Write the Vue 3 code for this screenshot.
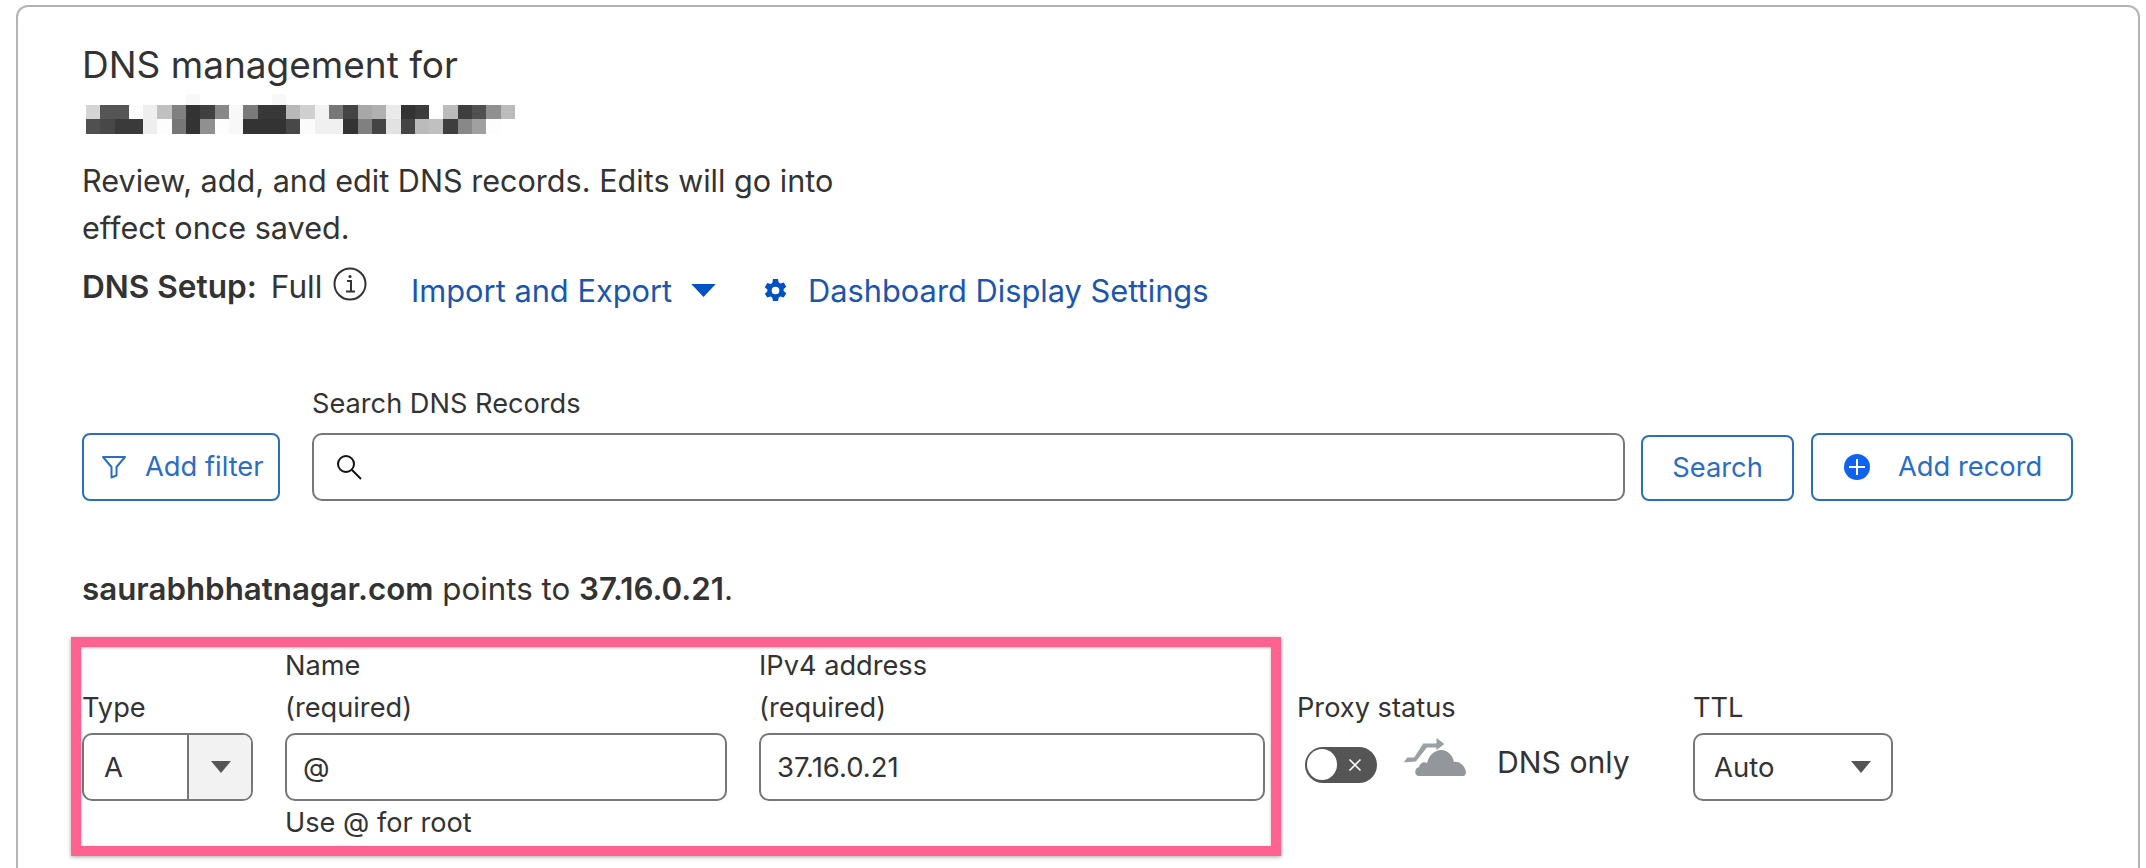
<script setup>
const row0 = Array.from({ length: 30 }, (_, i) => (i === 7 || i === 13 ? '#f8f8f8' : '#fff'))
const row1 = ['#d4d4d4','#555','#555','#fdfdfd','#eee','#c0c0c0','#808080','#333','#404040','#888','#f8f8f8','#7a7a7a','#383838','#383838','#b8b8b8','#d0d0d0','#f2f2f2','#777','#444','#a8a8a8','#b0b0b0','#eaeaea','#333','#3c3c3c','#fff','#bbb','#3e3e3e','#505050','#909090','#bbb']
const row2 = ['#505050','#484848','#3a3a3a','#3a3a3a','#eee','#fdfdfd','#777','#333','#909090','#fdfdfd','#f8f8f8','#333','#333','#333','#484848','#fbfbfb','#f0f0f0','#f0f0f0','#333','#808080','#444','#e2e2e2','#444','#bbb','#c0c0c0','#3e3e3e','#888','#a0a0a0','#fdfdfd','#fff']
const mosaic = [...row0, ...row1, ...row2]
</script>

<template>
  <div class="page">
    <section class="card">
      <h1 class="title">DNS management for</h1>
      <div class="mosaic" role="img" aria-label="Obscured domain name">
        <i v-for="(c, i) in mosaic" :key="i" :style="{ background: c }"></i>
      </div>
      <p class="intro">Review, add, and edit DNS records. Edits will go into<br>effect once saved.</p>

      <div class="setup">
        <span class="setup-state"><b>DNS Setup:</b><span class="full">Full</span>
          <svg class="info" viewBox="0 0 34 34" fill="none" stroke="#333" stroke-width="2"><circle cx="17" cy="17" r="15.500"/><path d="M14 14h4v10M13 24.500h9" /><circle cx="17" cy="9.500" r="1.600" fill="#333" stroke="none"/></svg>
        </span>
        <a class="link import">Import and Export
          <svg class="caret-big" viewBox="0 0 28 16"><path d="M1 1h26L14 15z" fill="#0051c3"/></svg>
        </a>
        <a class="link settings">
          <svg class="gear" viewBox="0 0 24 24" fill="#0051c3"><path fill-rule="evenodd" d="M9.600 1h4.800l.7 3.300 1.600.9 3.200-1 2.400 4.100-2.500 2.300v1.800l2.500 2.300-2.400 4.100-3.200-1-1.600.9-.7 3.300H9.600l-.7-3.300-1.600-.9-3.200 1L1.700 15.200l2.500-2.300v-1.800L1.700 8.800l2.400-4.100 3.200 1 1.600-.9zM12 8.300a3.700 3.700 0 1 0 0 7.400 3.700 3.700 0 0 0 0-7.400z"/></svg>
          Dashboard Display Settings
        </a>
      </div>

      <div class="search-row">
        <button class="btn filter">
          <svg class="funnel" viewBox="0 0 26 24" fill="none" stroke="#2a6fc4" stroke-width="2" stroke-linejoin="round"><path d="M2 2h22l-8.500 10v8.500l-5 2V12z"/></svg>
          Add filter
        </button>
        <label class="search-field">
          <span class="label">Search DNS Records</span>
          <span class="input search-input">
            <svg class="lens" viewBox="0 0 28 28" fill="none" stroke="#111" stroke-width="2"><circle cx="11" cy="11" r="8"/><path d="M17 17l9 9"/></svg>
          </span>
        </label>
        <button class="btn search">Search</button>
        <button class="btn add">
          <svg class="plus" viewBox="0 0 26 26"><circle cx="13" cy="13" r="13" fill="#0f62f0"/><path d="M13 5v16M5 13h16" stroke="#fff" stroke-width="2"/></svg>
          Add record
        </button>
      </div>

      <p class="points"><b>saurabhbhatnagar.com</b> points to <b>37.16.0.21</b>.</p>

      <div class="form">
        <div class="field f-type">
          <span class="label">Type</span>
          <div class="input type-select"><span class="type-val">A</span><span class="type-btn"><svg class="caret" viewBox="0 0 20 12"><path d="M0 0h20L10 12z" fill="#555"/></svg></span></div>
        </div>
        <div class="field f-name">
          <span class="label">Name<br>(required)</span>
          <div class="input text-input">@</div>
          <span class="hint">Use @ for root</span>
        </div>
        <div class="field f-ip">
          <span class="label">IPv4 address<br>(required)</span>
          <div class="input text-input">37.16.0.21</div>
        </div>
        <div class="field f-proxy">
          <span class="label">Proxy status</span>
          <div class="proxy">
            <span class="toggle"><span class="knob"></span><svg class="x" viewBox="0 0 14 14" stroke="#fff" stroke-width="1.600"><path d="M1.500 1.500l11 11M12.500 1.500l-11 11"/></svg></span>
            <svg class="cloud" viewBox="0 0 63 39">
              <path fill="#93979b" d="M16 39c-5 0-5-8 0-9 1-4 5-6 8-4 2-8 8-13 14-13 7 0 12 6 13 12 6-1 11 4 12 10 0 2-1 4-3 4z"/>
              <path fill="#9aa0a5" stroke="#fff" stroke-width="1" d="M0 26l4-6h7L20 6h13V0l9 7-9 7v-3h-9L13 25z"/>
            </svg>
            <span class="dns-only">DNS only</span>
          </div>
        </div>
        <div class="field f-ttl">
          <span class="label">TTL</span>
          <div class="input ttl-select">Auto<svg class="caret" viewBox="0 0 20 12"><path d="M0 0h20L10 12z" fill="#555"/></svg></div>
        </div>
      </div>
      <div class="highlight"></div>
    </section>
  </div>
</template>

<style>
html, body { margin: 0; background: #fff; overflow: hidden; }
</style>

<style scoped>
.page {
  width: 2146px;
  height: 868px;
  overflow: hidden;
  padding: 5px 6px 0 16px;
  box-sizing: border-box;
  font-family: Inter, "Liberation Sans", sans-serif;
  color: #333;
}
.card {
  position: relative;
  box-sizing: border-box;
  height: 1000px;
  border: 2px solid #b4b4b4;
  border-radius: 12px;
  padding: 0 0 0 64px;
}
.title { margin: 38px 0 0; font-size: 37px; line-height: 40px; font-weight: 400; }
.mosaic {
  display: grid;
  grid-template-columns: repeat(30, 14.300px);
  grid-template-rows: 11px 14.300px 14.700px;
  margin: 9px 0 0 4px;
}
.mosaic i { display: block; }
.intro { margin: 23px 0 0; font-size: 30.600px; line-height: 47px; }
.setup { display: flex; align-items: center; margin-top: 20px; font-size: 30.800px; line-height: 40px; height: 40px; }
.setup-state { display: flex; align-items: center; width: 329px; margin-top: -8px; font-size: 31.600px; }
.setup-state b { font-weight: 600; }
.full { margin-left: 14px; }
.info { width: 34px; height: 34px; margin: -6px 0 0 11px; }
.link { color: #1a56ad; display: flex; align-items: center; }
.import { width: 352px; }
.caret-big { width: 27px; height: 15px; margin-left: 18px; }
.gear { width: 25px; height: 25px; margin-right: 20px; }
.search-row { display: flex; align-items: flex-end; margin-top: 75px; }
.btn {
  box-sizing: border-box;
  border: 2px solid #2a6fb8;
  border-radius: 8px;
  background: #fff;
  color: #2a6dc4;
  font: 400 27.300px Inter, "Liberation Sans", sans-serif;
  display: flex;
  align-items: center;
  padding: 0;
}
.filter { width: 198px; height: 68px; padding-left: 17px; gap: 18px; }
.funnel { width: 26px; height: 24px; flex: none; }
.search-field { display: flex; flex-direction: column; margin-left: 32px; }
.label { font-size: 27.200px; line-height: 42px; }
.search-field .label { line-height: 36px; margin-bottom: 11px; }
.input { box-sizing: border-box; border: 2px solid #777; border-radius: 10px; background: #fff; height: 68px; }
.search-input { display: flex; align-items: center; width: 1313px; padding-left: 21px; }
.lens { width: 28px; height: 28px; }
.search { width: 153px; height: 66px; margin-left: 16px; justify-content: center; }
.add { width: 262px; height: 68px; margin-left: 17px; padding-left: 31px; gap: 28px; }
.plus { width: 26px; height: 26px; flex: none; }
.points { margin: 68px 0 0; font-size: 31.300px; line-height: 40px; }
.points b { font-weight: 600; }
.form {
  display: grid;
  grid-template-columns: 171px 442px 506px 364px 200px;
  column-gap: 32px;
  align-items: start;
  margin: 36px 0 0;
}
.field { display: flex; flex-direction: column; }
.f-type, .f-proxy, .f-ttl { padding-top: 42px; }
.field .label { margin-bottom: 4px; }
.type-select { display: flex; overflow: hidden; font-size: 27.500px; }
.type-val { width: 105px; padding-left: 20px; box-sizing: border-box; line-height: 64px; border-right: 2px solid #777; }
.type-btn { flex: 1; background: #f2f2f2; display: flex; align-items: center; justify-content: center; padding-left: 2px; }
.caret { width: 20px; height: 12px; }
.text-input { padding-left: 16px; font-size: 27.500px; line-height: 64px; }
.hint { font-size: 27.200px; line-height: 36px; margin-top: 4px; }
.proxy { display: flex; align-items: center; height: 68px; }
.toggle {
  box-sizing: border-box;
  width: 72px; height: 36px;
  margin: -4px 0 0 8px;
  border-radius: 18px;
  background: #555;
  display: flex; align-items: center;
  padding: 0 2px;
  gap: 11px;
}
.knob { width: 30px; height: 31px; border-radius: 50%; background: #fff; }
.x { width: 14px; height: 14px; }
.cloud { width: 63px; height: 39px; margin: -21px 0 0 26px; }
.dns-only { font-size: 30.200px; margin: -10px 0 0 31px; }
.ttl-select { display: flex; align-items: center; justify-content: space-between; padding: 0 20px 0 19px; font-size: 27.500px; }
.highlight {
  position: absolute;
  left: 53px; top: 630px;
  width: 1210px; height: 219px;
  box-sizing: border-box;
  border: 10px solid #fd6290;
  box-shadow: 0 1px 4px rgba(0,0,0,.35), inset 0 1px 3px rgba(0,0,0,.25);
  pointer-events: none;
}
</style>
